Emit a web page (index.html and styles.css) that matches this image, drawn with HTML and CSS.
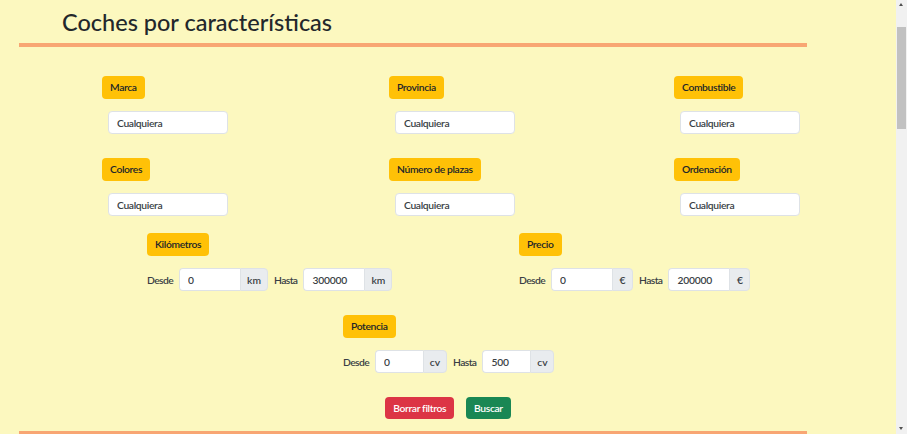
FILE: index.html
```html
<!DOCTYPE html>
<html lang="es">
<head>
<meta charset="utf-8">
<title>Coches por características</title>
<link rel="stylesheet" href="styles.css">
</head>
<body>
<div class="page">
  <h1 class="title">Coches por características</h1>
  <hr class="rule">
  <form class="filters">
    <div class="select-grid">
      <div class="field"><span class="badge">Marca</span><input class="control" type="text" value="Cualquiera" readonly></div>
      <div class="field"><span class="badge">Provincia</span><input class="control" type="text" value="Cualquiera" readonly></div>
      <div class="field"><span class="badge">Combustible</span><input class="control" type="text" value="Cualquiera" readonly></div>
      <div class="field"><span class="badge">Colores</span><input class="control" type="text" value="Cualquiera" readonly></div>
      <div class="field"><span class="badge">Número de plazas</span><input class="control" type="text" value="Cualquiera" readonly></div>
      <div class="field"><span class="badge">Ordenación</span><input class="control" type="text" value="Cualquiera" readonly></div>
    </div>
    <div class="range-grid">
      <div class="range">
        <span class="badge">Kilómetros</span>
        <div class="range-row">
          <span class="lbl">Desde</span>
          <div class="igroup"><input class="num wide" type="text" value="0"><span class="addon a28">km</span></div>
          <span class="lbl">Hasta</span>
          <div class="igroup"><input class="num wide" type="text" value="300000"><span class="addon a28">km</span></div>
        </div>
      </div>
      <div class="range">
        <span class="badge">Precio</span>
        <div class="range-row">
          <span class="lbl">Desde</span>
          <div class="igroup"><input class="num wide" type="text" value="0"><span class="addon a21">€</span></div>
          <span class="lbl">Hasta</span>
          <div class="igroup"><input class="num wide" type="text" value="200000"><span class="addon a21">€</span></div>
        </div>
      </div>
    </div>
    <div class="range power">
      <span class="badge">Potencia</span>
      <div class="range-row">
        <span class="lbl">Desde</span>
        <div class="igroup"><input class="num narrow" type="text" value="0"><span class="addon a24">cv</span></div>
        <span class="lbl">Hasta</span>
        <div class="igroup"><input class="num narrow" type="text" value="500"><span class="addon a24">cv</span></div>
      </div>
    </div>
    <div class="actions">
      <button type="reset" class="btn btn-red">Borrar filtros</button>
      <button type="submit" class="btn btn-green">Buscar</button>
    </div>
  </form>
  <hr class="rule rule-bottom">
  <section class="results"></section>
</div>
<div class="scrollbar" aria-hidden="true">
  <span class="sb-arrow sb-up"></span>
  <span class="sb-thumb"></span>
  <span class="sb-arrow sb-down"></span>
</div>
</body>
</html>
```
FILE: styles.css
```css
html, body {
  margin: 0;
  padding: 0;
}
body {
  background: #fcf8bf;
  font-family: "Lato", "Open Sans", sans-serif;
  color: #212529;
}
.page {
  width: 788px;
  margin-left: 19px;
}
.title {
  margin: 7px 0 0 43px;
  font-size: 23.5px;
  line-height: 30px;
  font-weight: 500;
  color: #23272b;
}
.rule {
  margin: 6px 0 0;
  border: 0;
  height: 4px;
  background: #f8a673;
}
.filters {
  display: flex;
  flex-direction: column;
}
.select-grid {
  margin-top: 29px;
  padding-left: 83px;
  display: grid;
  grid-template-columns: 287px 285px 1fr;
  row-gap: 24px;
}
.field {
  display: flex;
  flex-direction: column;
  align-items: flex-start;
  gap: 12px;
}
.badge {
  display: inline-block;
  height: 23px;
  line-height: 23px;
  padding: 0 8px;
  background: #ffc107;
  border-radius: 4px;
  font-size: 10.3px;
  font-weight: 600;
  letter-spacing: -0.35px;
  color: #212529;
  white-space: nowrap;
}
.control {
  margin-left: 6px;
  width: 120px;
  height: 23px;
  box-sizing: border-box;
  padding: 0 8px;
  border: 1px solid #dee2e6;
  border-radius: 4px;
  background: #fff;
  font: 600 10.3px "Lato", "Open Sans", sans-serif;
  letter-spacing: -0.35px;
  color: #3a3f45;
  outline: none;
}
.range-grid {
  margin-top: 17px;
  padding-left: 128px;
  display: grid;
  grid-template-columns: 372px 1fr;
}
.range {
  display: flex;
  flex-direction: column;
  align-items: flex-start;
  gap: 12px;
}
.power {
  margin-top: 24px;
  padding-left: 324px;
}
.range-row {
  display: flex;
  align-items: center;
  gap: 6px;
}
.lbl {
  font-size: 10.3px;
  font-weight: 600;
  letter-spacing: -0.6px;
  color: #3a3f45;
}
.igroup {
  display: flex;
  height: 23px;
}
.num {
  height: 23px;
  box-sizing: border-box;
  padding: 0 8px;
  border: 1px solid #dee2e6;
  border-right: 0;
  border-radius: 4px 0 0 4px;
  background: #fff;
  font: 600 10.3px "Lato", "Open Sans", sans-serif;
  letter-spacing: -0.2px;
  color: #3a3f45;
  outline: none;
}
.num.wide { width: 61px; }
.num.narrow { width: 48px; }
.addon {
  box-sizing: border-box;
  height: 23px;
  display: flex;
  align-items: center;
  justify-content: center;
  background: #e9ecef;
  border: 1px solid #dee2e6;
  border-radius: 0 4px 4px 0;
  font-size: 10.3px;
  font-weight: 600;
  color: #3a3f45;
}
.a28 { width: 28px; }
.a21 { width: 21px; }
.a24 { width: 24px; }
.actions {
  margin-top: 24px;
  padding-left: 70px;
  display: flex;
  justify-content: center;
  gap: 12px;
}
.btn {
  height: 22px;
  padding: 0 8px;
  border: 0;
  border-radius: 4px;
  font: 600 10.3px "Lato", "Open Sans", sans-serif;
  letter-spacing: -0.35px;
  color: #fff;
  cursor: pointer;
}
.btn-red { background: #dc3545; }
.btn-green { background: #198754; }
.rule-bottom {
  margin-top: 12px;
}
.results {
  height: 1250px;
}
.scrollbar {
  position: fixed;
  top: 0;
  right: 0;
  width: 11px;
  height: 100vh;
  background: #f1f1f1;
}
.sb-thumb {
  position: absolute;
  top: 27px;
  left: 1px;
  width: 9px;
  height: 102px;
  background: #c1c1c1;
}
.sb-arrow {
  position: absolute;
  left: 3px;
  width: 0;
  height: 0;
  border-left: 2.5px solid transparent;
  border-right: 2.5px solid transparent;
}
.sb-up {
  top: 3px;
  border-bottom: 3px solid #505050;
}
.sb-down {
  bottom: 4px;
  border-top: 3px solid #505050;
}
```
